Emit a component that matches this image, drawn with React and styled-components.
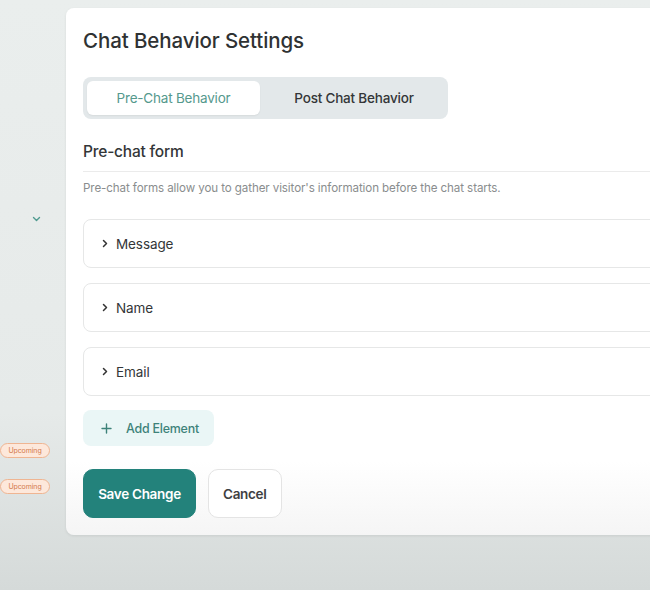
import styled, { createGlobalStyle } from 'styled-components'

const GlobalStyle = createGlobalStyle`
  html, body {
    margin: 0;
    padding: 0;
  }
  body {
    font-family: Inter, "Open Sans", "Liberation Sans", sans-serif;
    background: linear-gradient(180deg, #eaeeed 0%, #e6eae9 70%, #d5dad9 100%);
    min-height: 590px;
    overflow: hidden;
  }
`

const Page = styled.div`
  display: flex;
  width: 650px;
  height: 590px;
  overflow: hidden;
`

const Sidebar = styled.div`
  flex: 0 0 66px;
  display: flex;
  flex-direction: column;
  align-items: center;
  padding-top: 214px;
  box-sizing: border-box;
`

const SideChevron = styled.div`
  width: 10px;
  height: 10px;
  display: flex;
  align-items: center;
  justify-content: center;
  margin-left: 6px;
  color: #4f9a8f;
`

const Badges = styled.div`
  display: flex;
  flex-direction: column;
  gap: 21px;
  margin-top: 219px;
  margin-right: 16px;
`

const Badge = styled.span`
  display: inline-flex;
  align-items: center;
  justify-content: center;
  width: 50px;
  height: 15px;
  box-sizing: border-box;
  border: 1px solid #efb592;
  border-radius: 8px;
  background: #fde8db;
  color: #d3784a;
  font-size: 7px;
  letter-spacing: -0.1px;
`

const Card = styled.div`
  flex: 0 0 620px;
  margin-top: 8px;
  height: 527px;
  background: linear-gradient(180deg, #ffffff 0%, #ffffff 86%, #f5f5f5 100%);
  border-radius: 8px 0 0 8px;
  box-shadow: 0 1px 3px rgba(0, 0, 0, 0.08);
  padding: 20px 17px 0 17px;
  box-sizing: border-box;
`

const Title = styled.h1`
  margin: 0;
  font-size: 20.5px;
  line-height: 26px;
  font-weight: 500;
  color: #2f3233;
  letter-spacing: -0.1px;
`

const Tabs = styled.div`
  display: flex;
  width: 365px;
  height: 42px;
  box-sizing: border-box;
  padding: 4px;
  margin-top: 23px;
  background: #e3e8ea;
  border-radius: 8px;
`

const Tab = styled.button`
  flex: 0 0 ${p => (p.$active ? '173px' : '188px')};
  border: none;
  border-radius: 6px;
  background: ${p => (p.$active ? '#ffffff' : 'transparent')};
  color: ${p => (p.$active ? '#55998d' : '#333638')};
  font-family: inherit;
  font-size: 13.5px;
  font-weight: ${p => (p.$active ? 400 : 500)};
  letter-spacing: -0.2px;
  padding: 0;
  box-shadow: ${p => (p.$active ? '0 1px 2px rgba(0,0,0,0.06)' : 'none')};
`

const SectionHeader = styled.div`
  margin-top: 23px;
  padding-bottom: 9px;
  border-bottom: 1px solid #ebebeb;
  font-size: 15.5px;
  line-height: 20px;
  font-weight: 500;
  color: #333638;
  letter-spacing: -0.2px;
`

const Description = styled.p`
  margin: 8px 0 0;
  font-size: 11.6px;
  line-height: 16px;
  color: #8a8d8e;
  letter-spacing: -0.1px;
`

const List = styled.div`
  display: flex;
  flex-direction: column;
  gap: 15px;
  margin-top: 23px;
`

const Item = styled.div`
  display: flex;
  align-items: center;
  gap: 7px;
  height: 49px;
  box-sizing: border-box;
  padding-left: 17px;
  border: 1px solid #e6e7e7;
  border-radius: 8px;
  font-size: 13.5px;
  color: #333638;
  letter-spacing: -0.1px;
`

const AddButton = styled.button`
  display: flex;
  align-items: center;
  gap: 14px;
  width: 131px;
  height: 36px;
  margin-top: 14px;
  padding: 0 0 0 18px;
  border: none;
  border-radius: 8px;
  background: #eaf6f6;
  color: #3d8279;
  font-family: inherit;
  font-size: 12.4px;
  font-weight: 500;
  letter-spacing: -0.2px;
`

const Actions = styled.div`
  display: flex;
  gap: 12px;
  margin-top: 23px;
`

const Button = styled.button`
  height: 49px;
  padding: 0 14px;
  border-radius: 10px;
  font-family: inherit;
  font-size: 13.5px;
  font-weight: 600;
  letter-spacing: -0.3px;
  border: 1px solid #e4e4e4;
  background: #ffffff;
  color: #3e4042;
`

const PrimaryButton = styled(Button)`
  width: 113px;
  border-color: #23827b;
  background: #23827b;
  color: #ffffff;
`

const Chevron = () => (
  <svg width="8" height="9" viewBox="0 0 8 9" fill="none">
    <path d="M2.5 1.5L5.5 4.5L2.5 7.5" stroke="#333" strokeWidth="1.5" strokeLinecap="round" strokeLinejoin="round" />
  </svg>
)

const items = ['Message', 'Name', 'Email']

export default function App() {
  return (
    <>
      <GlobalStyle />
      <Page>
        <Sidebar>
          <SideChevron>
            <svg width="9" height="6" viewBox="0 0 9 6" fill="none">
              <path d="M1.5 1.5L4.5 4.5L7.5 1.5" stroke="currentColor" strokeWidth="1.4" strokeLinecap="round" strokeLinejoin="round" />
            </svg>
          </SideChevron>
          <Badges>
            <Badge>Upcoming</Badge>
            <Badge>Upcoming</Badge>
          </Badges>
        </Sidebar>
        <Card>
          <Title>Chat Behavior Settings</Title>
          <Tabs>
            <Tab $active>Pre-Chat Behavior</Tab>
            <Tab>Post Chat Behavior</Tab>
          </Tabs>
          <SectionHeader>Pre-chat form</SectionHeader>
          <Description>Pre-chat forms allow you to gather visitor's information before the chat starts.</Description>
          <List>
            {items.map(name => (
              <Item key={name}>
                <Chevron />
                {name}
              </Item>
            ))}
          </List>
          <AddButton>
            <svg width="11" height="11" viewBox="0 0 11 11" fill="none">
              <path d="M5.5 1V10M1 5.5H10" stroke="currentColor" strokeWidth="1.4" strokeLinecap="round" />
            </svg>
            Add Element
          </AddButton>
          <Actions>
            <PrimaryButton>Save Change</PrimaryButton>
            <Button>Cancel</Button>
          </Actions>
        </Card>
      </Page>
    </>
  )
}
